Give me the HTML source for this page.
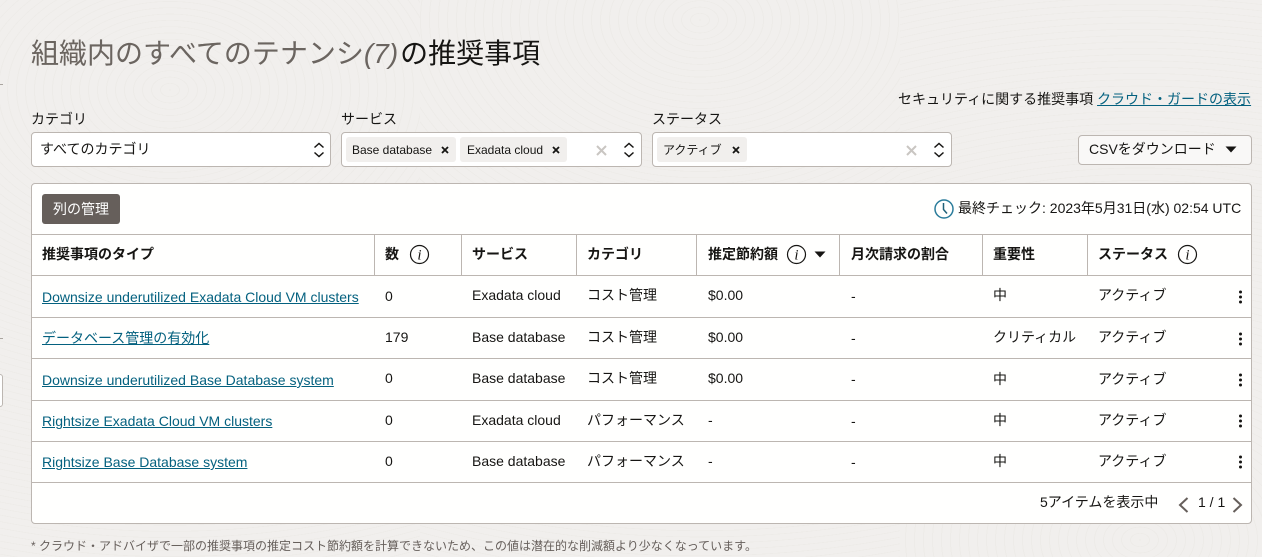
<!DOCTYPE html>
<html lang="ja"><head><meta charset="utf-8"><title>推奨事項</title>
<style>
*{box-sizing:border-box}
html,body{margin:0;padding:0;width:1262px;height:557px;overflow:hidden}
body{position:relative;background:#f1efed;font-family:"Liberation Sans","Noto Sans CJK JP",sans-serif;font-size:14px;color:#161513}
.bg{position:absolute;top:0;height:557px}
.t{position:absolute;white-space:nowrap;line-height:20px}
.b{position:absolute;background:#fff;border:1px solid #bcb6b1;border-radius:4px}
.chip{position:absolute;top:137px;height:25px;background:#f1efed;border-radius:3px}
.h{font-weight:bold}
.l{color:#04617f;text-decoration:underline}
.hl{position:absolute;left:32px;width:1219px;height:1px;background:#bcb6b1}
.vl{position:absolute;top:235px;height:40px;width:1px;background:#bcb6b1}
svg{position:absolute;overflow:visible}
.c12{font-size:12px}
</style></head><body>
<div class="bg" style="left:0;width:420px;background:repeating-radial-gradient(ellipse 100px 70px at 170px 90px,#edebe8 0 1px,transparent 1px 9px)"></div>
<div class="bg" style="left:420px;width:480px;background:repeating-radial-gradient(ellipse 100px 70px at 280px 20px,#edebe8 0 1px,transparent 1px 9px)"></div>
<div class="bg" style="left:900px;width:362px;background:repeating-radial-gradient(ellipse 100px 70px at 240px 540px,#edebe8 0 1px,transparent 1px 9px)"></div>

<div style="position:absolute;left:0;top:84px;width:3px;height:1px;background:#aaa5a0"></div>
<div style="position:absolute;left:0;top:338px;width:3px;height:1px;background:#aaa5a0"></div>
<div style="position:absolute;left:-4px;top:374px;width:7px;height:33px;background:#fff;border:1px solid #bcb6b1;border-radius:3px"></div>

<div class="t" style="left:31px;top:37px;font-size:28px;line-height:34px;color:#6b6560">組織内のすべてのテナンシ<i style="padding-right:2px">(7)</i><span style="color:#161513">の推奨事項</span></div>

<div class="t" style="left:898px;top:89px">セキュリティに関する推奨事項 <span class="l">クラウド・ガードの表示</span></div>

<div class="t" style="left:31px;top:109px">カテゴリ</div>
<div class="t" style="left:341px;top:109px">サービス</div>
<div class="t" style="left:652px;top:109px">ステータス</div>

<div class="b" style="left:31px;top:132px;width:300px;height:35px"></div>
<div class="t" style="left:40px;top:139px">すべてのカテゴリ</div>
<svg style="left:313px;top:142px" width="12" height="16" fill="none" stroke="#161513" stroke-width="1.500"><path d="M1.500 5.500L6 1.500L10.500 5.500M1.500 10.500L6 14.500L10.500 10.500"/></svg>

<div class="b" style="left:341px;top:132px;width:301px;height:35px"></div>
<div class="chip" style="left:346px;width:110px"></div>
<div class="t c12" style="left:352px;top:140px">Base database</div>
<svg style="left:441px;top:146px" width="8" height="8" stroke="#161513" stroke-width="1.800"><path d="M1 1L7 7M7 1L1 7"/></svg>
<div class="chip" style="left:460px;width:107px"></div>
<div class="t c12" style="left:467px;top:140px">Exadata cloud</div>
<svg style="left:552px;top:146px" width="8" height="8" stroke="#161513" stroke-width="1.800"><path d="M1 1L7 7M7 1L1 7"/></svg>
<svg style="left:596px;top:145px" width="11" height="11" stroke="#c9c6c2" stroke-width="2"><path d="M1 1L10 10M10 1L1 10"/></svg>
<svg style="left:623px;top:142px" width="12" height="16" fill="none" stroke="#161513" stroke-width="1.500"><path d="M1.500 5.500L6 1.500L10.500 5.500M1.500 10.500L6 14.500L10.500 10.500"/></svg>

<div class="b" style="left:652px;top:132px;width:300px;height:35px"></div>
<div class="chip" style="left:657px;width:90px"></div>
<div class="t c12" style="left:663px;top:140px">アクティブ</div>
<svg style="left:732px;top:146px" width="8" height="8" stroke="#161513" stroke-width="1.800"><path d="M1 1L7 7M7 1L1 7"/></svg>
<svg style="left:906px;top:145px" width="11" height="11" stroke="#c9c6c2" stroke-width="2"><path d="M1 1L10 10M10 1L1 10"/></svg>
<svg style="left:933px;top:142px" width="12" height="16" fill="none" stroke="#161513" stroke-width="1.500"><path d="M1.500 5.500L6 1.500L10.500 5.500M1.500 10.500L6 14.500L10.500 10.500"/></svg>

<div class="b" style="left:1078px;top:135px;width:174px;height:30px;background:#f9f8f7"></div>
<div class="t" style="left:1089px;top:139px">CSVをダウンロード</div>
<svg style="left:1225px;top:146px" width="12" height="7" fill="#161513"><path d="M0.500 0.500H11.500L6 6.500Z"/></svg>

<div class="b" style="left:31px;top:183px;width:1221px;height:341px;background:#fffffe"></div>
<div style="position:absolute;left:42px;top:194px;width:78px;height:30px;background:#665f5b;border-radius:3px"></div>
<div class="t" style="left:53px;top:199px;color:#fff">列の管理</div>

<svg style="left:934px;top:199px" width="20" height="20" fill="none" stroke="#2b7c9b" stroke-width="1.500"><circle cx="10" cy="10" r="9"/><path d="M9.500 4V10.500L13 14.500" stroke="#1f6078"/></svg>
<div class="t" style="left:958px;top:198px">最終チェック: 2023年5月31日(水) 02:54 UTC</div>

<div class="hl" style="top:234px"></div>
<div class="hl" style="top:275px"></div>
<div class="hl" style="top:317px"></div>
<div class="hl" style="top:358px"></div>
<div class="hl" style="top:400px"></div>
<div class="hl" style="top:441px"></div>
<div class="hl" style="top:482px"></div>
<div class="vl" style="left:374px"></div>
<div class="vl" style="left:461px"></div>
<div class="vl" style="left:576px"></div>
<div class="vl" style="left:696px"></div>
<div class="vl" style="left:839px"></div>
<div class="vl" style="left:982px"></div>
<div class="vl" style="left:1087px"></div>

<div class="t h" style="left:42px;top:244px">推奨事項のタイプ</div>
<div class="t h" style="left:385px;top:244px">数</div>
<div class="t h" style="left:472px;top:244px">サービス</div>
<div class="t h" style="left:587px;top:244px">カテゴリ</div>
<div class="t h" style="left:708px;top:244px">推定節約額</div>
<div class="t h" style="left:851px;top:244px">月次請求の割合</div>
<div class="t h" style="left:993px;top:244px">重要性</div>
<div class="t h" style="left:1098px;top:244px">ステータス</div>

<svg style="left:410px;top:245px" width="19" height="19" fill="none" stroke="#161513" stroke-width="1.200"><circle cx="9.500" cy="9.500" r="9"/><text x="9.500" y="14.500" text-anchor="middle" font-family="Liberation Serif" font-style="italic" font-size="15" fill="#161513" stroke="none">i</text></svg>
<svg style="left:787px;top:245px" width="19" height="19" fill="none" stroke="#161513" stroke-width="1.200"><circle cx="9.500" cy="9.500" r="9"/><text x="9.500" y="14.500" text-anchor="middle" font-family="Liberation Serif" font-style="italic" font-size="15" fill="#161513" stroke="none">i</text></svg>
<svg style="left:1178px;top:245px" width="19" height="19" fill="none" stroke="#161513" stroke-width="1.200"><circle cx="9.500" cy="9.500" r="9"/><text x="9.500" y="14.500" text-anchor="middle" font-family="Liberation Serif" font-style="italic" font-size="15" fill="#161513" stroke="none">i</text></svg>
<svg style="left:814px;top:251px" width="12" height="7" fill="#161513"><path d="M0.500 0.500H11.500L6 6.500Z"/></svg>

<div class="t l" style="left:42px;top:287px">Downsize underutilized Exadata Cloud VM clusters</div>
<div class="t" style="left:385px;top:286px">0</div>
<div class="t" style="left:472px;top:285px">Exadata cloud</div>
<div class="t" style="left:587px;top:285px">コスト管理</div>
<div class="t" style="left:708px;top:285px">$0.00</div>
<div class="t" style="left:851px;top:286px">-</div>
<div class="t" style="left:993px;top:285px">中</div>
<div class="t" style="left:1098px;top:285px">アクティブ</div>

<div class="t l" style="left:42px;top:328px">データベース管理の有効化</div>
<div class="t" style="left:385px;top:327px">179</div>
<div class="t" style="left:472px;top:327px">Base database</div>
<div class="t" style="left:587px;top:327px">コスト管理</div>
<div class="t" style="left:708px;top:327px">$0.00</div>
<div class="t" style="left:851px;top:328px">-</div>
<div class="t" style="left:993px;top:327px">クリティカル</div>
<div class="t" style="left:1098px;top:327px">アクティブ</div>

<div class="t l" style="left:42px;top:370px">Downsize underutilized Base Database system</div>
<div class="t" style="left:385px;top:368px">0</div>
<div class="t" style="left:472px;top:368px">Base database</div>
<div class="t" style="left:587px;top:368px">コスト管理</div>
<div class="t" style="left:708px;top:368px">$0.00</div>
<div class="t" style="left:851px;top:369px">-</div>
<div class="t" style="left:993px;top:369px">中</div>
<div class="t" style="left:1098px;top:369px">アクティブ</div>

<div class="t l" style="left:42px;top:411px">Rightsize Exadata Cloud VM clusters</div>
<div class="t" style="left:385px;top:410px">0</div>
<div class="t" style="left:472px;top:410px">Exadata cloud</div>
<div class="t" style="left:587px;top:410px">パフォーマンス</div>
<div class="t" style="left:708px;top:410px">-</div>
<div class="t" style="left:851px;top:411px">-</div>
<div class="t" style="left:993px;top:410px">中</div>
<div class="t" style="left:1098px;top:410px">アクティブ</div>

<div class="t l" style="left:42px;top:452px">Rightsize Base Database system</div>
<div class="t" style="left:385px;top:451px">0</div>
<div class="t" style="left:472px;top:451px">Base database</div>
<div class="t" style="left:587px;top:451px">パフォーマンス</div>
<div class="t" style="left:708px;top:451px">-</div>
<div class="t" style="left:851px;top:452px">-</div>
<div class="t" style="left:993px;top:451px">中</div>
<div class="t" style="left:1098px;top:451px">アクティブ</div>

<svg style="left:1238px;top:290px" width="5" height="14" fill="#161513"><circle cx="2.500" cy="2" r="1.500"/><circle cx="2.500" cy="7" r="1.500"/><circle cx="2.500" cy="12" r="1.500"/></svg>
<svg style="left:1238px;top:332px" width="5" height="14" fill="#161513"><circle cx="2.500" cy="2" r="1.500"/><circle cx="2.500" cy="7" r="1.500"/><circle cx="2.500" cy="12" r="1.500"/></svg>
<svg style="left:1238px;top:373px" width="5" height="14" fill="#161513"><circle cx="2.500" cy="2" r="1.500"/><circle cx="2.500" cy="7" r="1.500"/><circle cx="2.500" cy="12" r="1.500"/></svg>
<svg style="left:1238px;top:414px" width="5" height="14" fill="#161513"><circle cx="2.500" cy="2" r="1.500"/><circle cx="2.500" cy="7" r="1.500"/><circle cx="2.500" cy="12" r="1.500"/></svg>
<svg style="left:1238px;top:455px" width="5" height="14" fill="#161513"><circle cx="2.500" cy="2" r="1.500"/><circle cx="2.500" cy="7" r="1.500"/><circle cx="2.500" cy="12" r="1.500"/></svg>

<div class="t" style="left:1040px;top:492px">5アイテムを表示中</div>
<svg style="left:1178px;top:497px" width="11" height="16" fill="none" stroke="#665f5b" stroke-width="2"><path d="M9.500 1L2 8L9.500 15"/></svg>
<div class="t" style="left:1198px;top:492px">1 / 1</div>
<svg style="left:1232px;top:497px" width="11" height="16" fill="none" stroke="#665f5b" stroke-width="2"><path d="M1.500 1L9 8L1.500 15"/></svg>

<div class="t c12" style="left:31px;top:536px;color:#665f5b">* クラウド・アドバイザで一部の推奨事項の推定コスト節約額を計算できないため、この値は潜在的な削減額より少なくなっています。</div>
</body></html>
